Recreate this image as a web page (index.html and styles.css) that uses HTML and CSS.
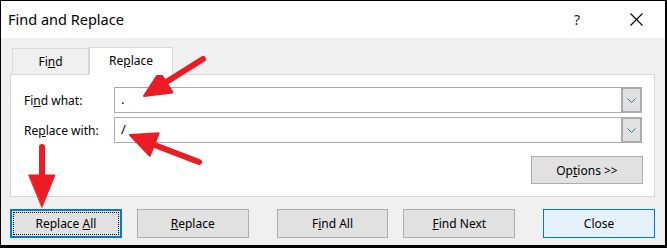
FILE: index.html
```html
<!DOCTYPE html>
<html>
<head>
<meta charset="utf-8">
<link rel="stylesheet" href="styles.css">
</head>
<body>
<div class="dialog">
  <div class="titlebar">
    <span class="title">Find and Replace</span>
    <span class="help">?</span>
    <svg class="close-x" width="13" height="13" viewBox="0 0 13 13"><path d="M0.5 0.5 L12.5 12.5 M12.5 0.5 L0.5 12.5" stroke="#000" stroke-width="1.1" fill="none"/></svg>
  </div>
  <div class="body">
    <div class="tabs">
      <div class="tab"><span>Fi<u>n</u>d</span></div>
      <div class="tab active"><span>Re<u>p</u>lace</span></div>
    </div>
    <div class="panel">
      <div class="row">
        <label class="lbl">Fi<u>n</u>d what:</label>
        <div class="combo"><div class="field">.</div><div class="drop"><svg width="9" height="5" viewBox="0 0 9 5"><path d="M0.5 0.5 L4.5 4.5 L8.5 0.5" stroke="#41707e" stroke-width="1" fill="none"/></svg></div></div>
      </div>
      <div class="row">
        <label class="lbl">Re<u>p</u>lace with:</label>
        <div class="combo"><div class="field">/</div><div class="drop"><svg width="9" height="5" viewBox="0 0 9 5"><path d="M0.5 0.5 L4.5 4.5 L8.5 0.5" stroke="#41707e" stroke-width="1" fill="none"/></svg></div></div>
      </div>
      <div class="opts-row">
        <div class="btn"><span>Op<u>t</u>ions &gt;&gt;</span></div>
      </div>
    </div>
    <div class="buttons">
      <div class="btn default"><div class="focus"><span>Replace <u>A</u>ll</span></div></div>
      <div class="btn"><span><u>R</u>eplace</span></div>
      <div class="btn sep"><span>F<u>i</u>nd All</span></div>
      <div class="btn"><span><u>F</u>ind Next</span></div>
      <div class="btn sep hot"><span>Close</span></div>
    </div>
  </div>
  <svg class="arrows" width="667" height="248" viewBox="0 0 667 248">
    <g fill="#ed1c24" stroke="#ed1c24" stroke-linecap="round" stroke-linejoin="round">
      <line x1="203" y1="59" x2="163" y2="84" stroke-width="6"/>
      <polygon points="144,96 172.4,92.4 159.6,72" stroke-width="2"/>
      <line x1="199" y1="162" x2="152" y2="144" stroke-width="6"/>
      <polygon points="130,135 149.8,155.7 158.6,133.3" stroke-width="2"/>
      <line x1="42" y1="147" x2="42" y2="178" stroke-width="6"/>
      <polygon points="29,175 55,175 42,207" stroke-width="1"/>
    </g>
  </svg>
</div>
</body>
</html>
```

FILE: styles.css
```css
* { box-sizing: border-box; }
html, body { margin: 0; padding: 0; }
body {
  width: 667px;
  height: 248px;
  font-family: "Noto Sans", "Open Sans", sans-serif;
  font-size: 12px;
  color: #000;
  overflow: hidden;
}
.dialog {
  position: relative;
  width: 667px;
  height: 248px;
  border-style: solid;
  border-color: #000;
  border-width: 1px 2px 3px 1px;
  display: flex;
  flex-direction: column;
  background: #f0f0f0;
}
.titlebar {
  height: 37px;
  background: #fff;
  display: flex;
  align-items: center;
  padding-left: 7px;
  padding-right: 22px;
}
.title {
  font-size: 14.5px;
  flex: 1;
  position: relative;
  top: -1px;
}
.help {
  font-size: 14px;
  margin-right: 50px;
  color: #222;
}
.close-x {
  display: block;
}
.body {
  flex: 1;
  padding: 9px 10px 0 9px;
  display: flex;
  flex-direction: column;
}
.tabs {
  display: flex;
  height: 27px;
  padding-left: 2px;
  align-items: flex-end;
}
.tab {
  width: 77px;
  height: 26px;
  border: 1px solid #d9d9d9;
  border-bottom: none;
  background: #f0f0f0;
  display: flex;
  justify-content: center;
  align-items: center;
  padding-bottom: 1px;
}
.tab.active {
  width: 84px;
  height: 28px;
  background: #fff;
  margin-bottom: -1px;
  position: relative;
  z-index: 1;
  padding-bottom: 3px;
}
.panel {
  height: 123px;
  background: #fff;
  border: 1px solid #d9d9d9;
  padding: 12px 11px 0 13px;
  display: flex;
  flex-direction: column;
  gap: 4px;
}
.row {
  display: flex;
  align-items: center;
  height: 26px;
}
.lbl {
  width: 90px;
}
.combo {
  width: 528px;
  height: 26px;
  display: flex;
  border: 1px solid #ababab;
  background: #fff;
}
.field {
  flex: 1;
  padding-left: 6px;
  line-height: 23px;
  font-size: 13px;
}
.drop {
  width: 21px;
  margin: -1px -1px -1px 0;
  border: 2px solid #ababab;
  background: #e1e1e1;
  display: flex;
  align-items: center;
  justify-content: center;
}
.opts-row {
  display: flex;
  justify-content: flex-end;
  margin-top: 9px;
}
.btn {
  width: 112px;
  height: 28px;
  border: 1px solid #adadad;
  background: #e1e1e1;
  display: flex;
  align-items: center;
  justify-content: center;
}
.buttons {
  display: flex;
  gap: 15px;
  margin-top: 12px;
}
.buttons .btn { height: 29px; }
.buttons .btn.sep { margin-left: 13px; }
.btn.default {
  border: 2px solid #0078d7;
  padding: 1px;
}
.focus {
  width: 100%;
  height: 100%;
  border: 1px dotted #000;
  display: flex;
  align-items: center;
  justify-content: center;
}
.btn.hot {
  background: #e5f1fb;
  border-color: #0078d7;
}
.arrows {
  position: absolute;
  left: -1px;
  top: -1px;
  pointer-events: none;
}
```
